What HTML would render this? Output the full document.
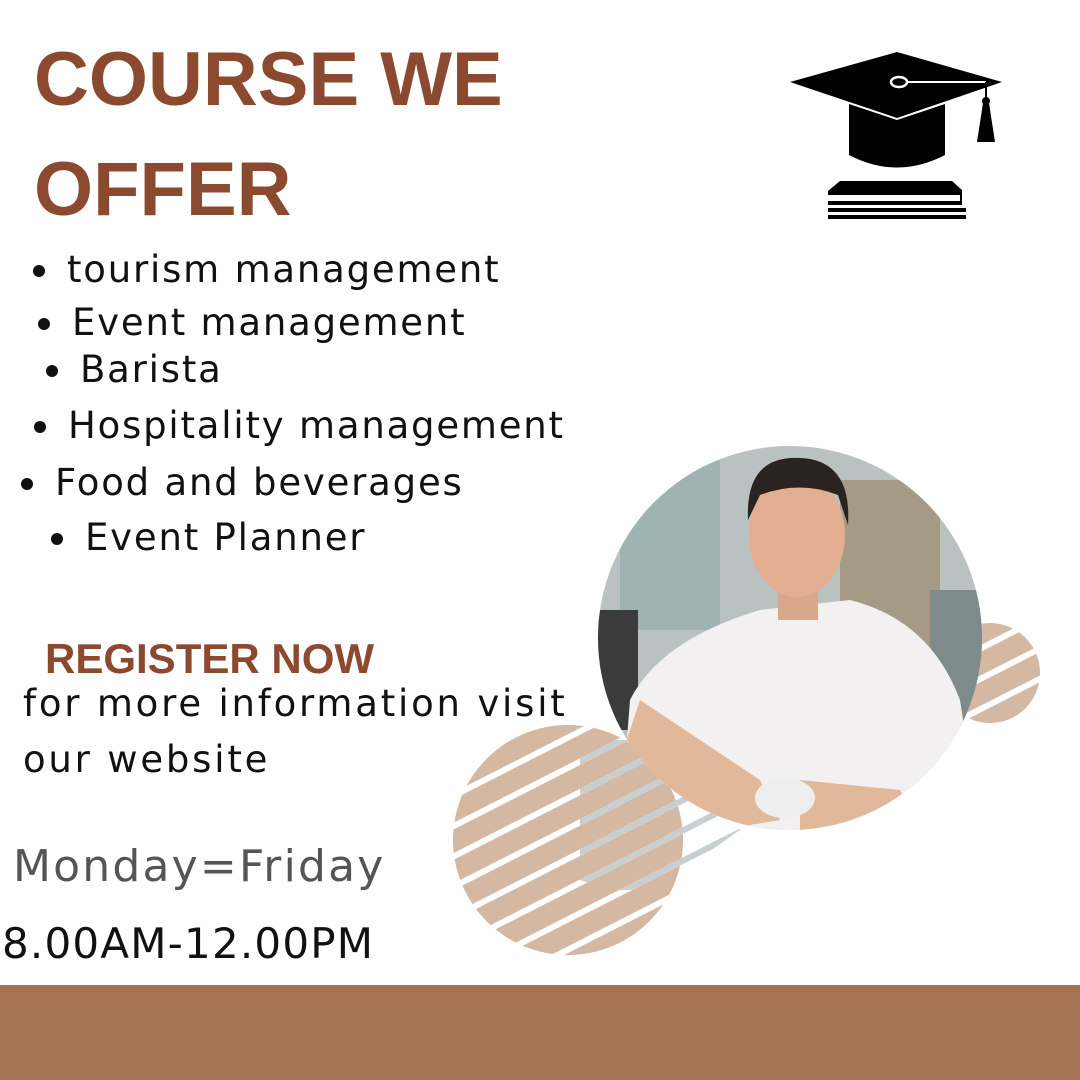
<!DOCTYPE html>
<html><head><meta charset="utf-8"><style>
body{margin:0}
#c{position:relative;width:1080px;height:1080px;background:#fff;overflow:hidden;font-family:"Liberation Sans",sans-serif}
.t{position:absolute;white-space:nowrap;line-height:1}
h1{position:absolute;margin:0;left:34px;top:25px;font-size:76px;line-height:110px;color:#8b4a2f;font-weight:bold;letter-spacing:0px}
.li{position:absolute;font-family:"DejaVu Sans",sans-serif;font-size:37px;color:#111;white-space:nowrap;line-height:1;letter-spacing:1.8px}
.li:before{content:"";position:absolute;left:-34px;top:14px;width:12px;height:12px;border-radius:50%;background:#111}
.d{font-family:"DejaVu Sans",sans-serif}
</style></head><body><div id="c">
<h1>COURSE WE<br>OFFER</h1>
<div class="li" style="left:67px;top:251px">tourism management</div>
<div class="li" style="left:72px;top:304px">Event management</div>
<div class="li" style="left:80px;top:351px">Barista</div>
<div class="li" style="left:68px;top:407px">Hospitality management</div>
<div class="li" style="left:55px;top:464px">Food and beverages</div>
<div class="li" style="left:85px;top:519px">Event Planner</div>
<div class="t" style="left:45px;top:638px;font-size:42px;font-weight:bold;color:#8b4a2f">REGISTER NOW</div>
<div class="t d" style="left:23px;top:685px;font-size:37px;color:#111;letter-spacing:2.8px">for more information visit</div>
<div class="t d" style="left:23px;top:741px;font-size:37px;color:#111;letter-spacing:2.8px">our website</div>
<div class="t d" style="left:13px;top:845px;font-size:44px;color:#555;letter-spacing:2.2px">Monday=Friday</div>
<div class="t d" style="left:2px;top:923px;font-size:42px;color:#111;letter-spacing:1.2px">8.00AM-12.00PM</div>
<div style="position:absolute;left:0;top:985px;width:1080px;height:95px;background:#a57352"></div>
<svg style="position:absolute;left:0;top:0" width="1080" height="1080">
<defs>
<pattern id="st" width="27" height="27" patternUnits="userSpaceOnUse" patternTransform="rotate(-27)"><rect width="27" height="21" fill="#d4b8a2"/></pattern>
<pattern id="gs" width="27" height="27" patternUnits="userSpaceOnUse" patternTransform="rotate(-27)"><rect y="21" width="27" height="6" fill="#c8cfd3"/></pattern>
<clipPath id="pc"><circle cx="790" cy="638" r="192"/></clipPath>
<clipPath id="gc"><path d="M580 740 L700 740 L740 830 L640 900 L580 880Z"/></clipPath>
</defs>
<circle cx="568" cy="840" r="115" fill="url(#st)"/>
<circle cx="990" cy="673" r="50" fill="url(#st)"/>
<rect x="570" y="730" width="170" height="160" fill="url(#gs)" clip-path="url(#gc)"/>
<g clip-path="url(#pc)">
<rect x="590" y="440" width="400" height="400" fill="#b9c2c0"/>
<rect x="620" y="460" width="100" height="170" fill="#9fb3b3"/>
<rect x="840" y="480" width="100" height="200" fill="#a59a86"/>
<rect x="930" y="590" width="60" height="140" fill="#7f8a8a"/>
<rect x="598" y="610" width="40" height="120" fill="#3b3b3b"/>
<path d="M630 700 Q660 640 760 610 L850 600 Q930 620 960 700 L980 830 L620 830 Z" fill="#f3f0f2"/>
<path d="M640 700 L760 780 L780 820 L720 830 L620 760 Z" fill="#e2b89a"/>
<path d="M800 780 L900 790 L920 830 L800 830Z" fill="#e2b89a"/>
<ellipse cx="785" cy="798" rx="30" ry="20" fill="#eee"/>
<rect x="778" y="570" width="40" height="50" fill="#d9a88a"/>
<ellipse cx="797" cy="535" rx="48" ry="62" fill="#e3ae92"/>
<path d="M748 520 Q745 455 800 458 Q852 460 848 525 L838 495 Q800 480 760 495Z" fill="#2a2320"/>
</g>
<path d="M790 82 L897 52 L1002 82 L897 118 Z" fill="#000"/>
<path d="M849 104 L849 155 Q897 180 945 155 L945 104 L897 120 Z" fill="#000"/>
<ellipse cx="899" cy="82" rx="8" ry="5" fill="none" stroke="#fff" stroke-width="2.5"/>
<line x1="907" y1="82" x2="986" y2="82" stroke="#fff" stroke-width="2"/>
<line x1="986" y1="82" x2="986" y2="100" stroke="#000" stroke-width="2"/>
<circle cx="986" cy="101" r="4" fill="#000"/>
<path d="M983 103 L989 103 L995 142 L977 142Z" fill="#000"/>
<path d="M840 181 L952 181 L962 190 L962 205 L828 205 L828 191Z" fill="#000"/>
<rect x="828" y="195" width="132" height="6" fill="#fff"/>
<rect x="828" y="208" width="138" height="4" fill="#000"/>
<rect x="828" y="215" width="138" height="4" fill="#000"/>
</svg>
</div></body></html>
